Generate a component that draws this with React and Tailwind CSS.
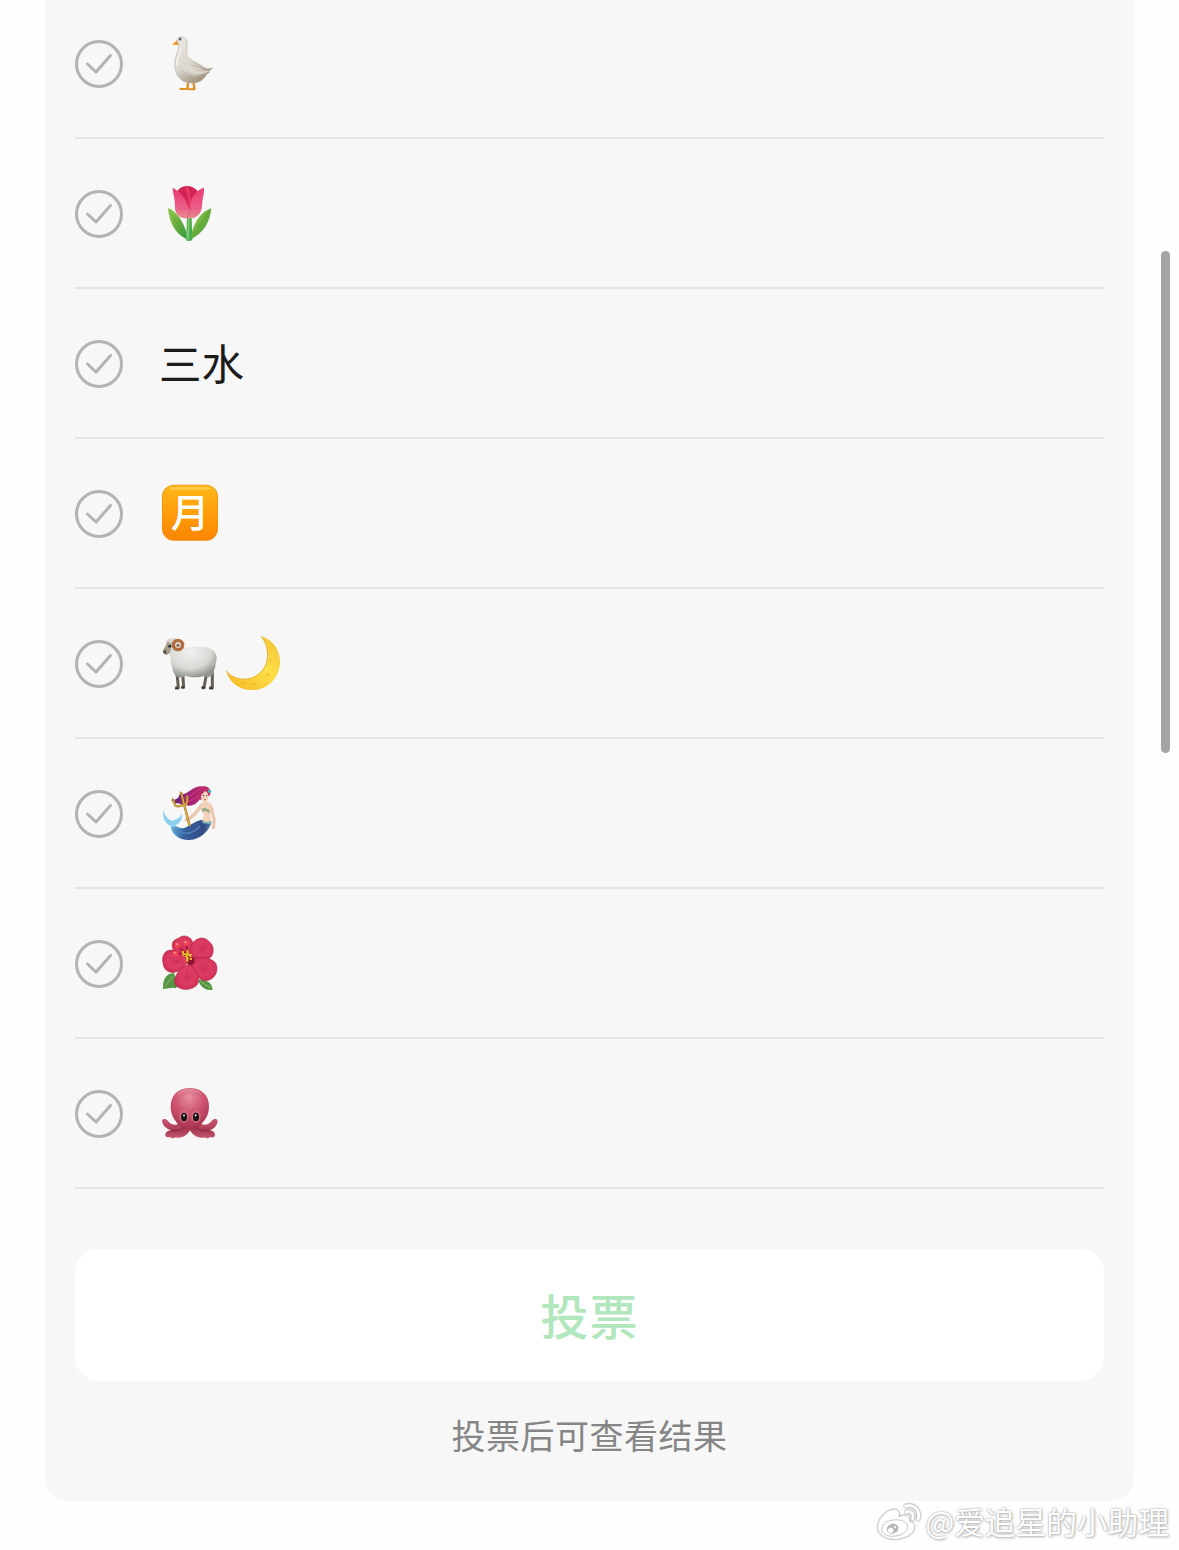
import React from "react";

const Goose = () => (
    <svg viewBox="0 -3 240 240" className="h-20 w-20">
        <defs>
            <linearGradient id="gooseBody" x1="0" y1="0" x2="0.5" y2="1">
                <stop offset="0" stopColor="#e9e6e1" />
                <stop offset="0.6" stopColor="#ddd8d0" />
                <stop offset="1" stopColor="#a39683" />
            </linearGradient>
        </defs>
        <g stroke="#dd8f22" strokeWidth="7" strokeLinecap="round" fill="none">
            <path d="M115 168L112 191M130 168L133 191" />
            <path d="M91 192H111M117 193H133" strokeWidth="6" />
        </g>
        <path d="M81 46L66 59L86 60L92 52Z" fill="#ee9a22" />
        <path d="M81 48C81 32 108 29 111 51C113 68 107 82 113 94C122 106 143 114 159 125C172 133 181 130 188 129L177 139L179 141L168 150C162 164 147 174 127 174C97 177 74 152 74 119C73 98 86 82 87 60Z" fill="url(#gooseBody)" stroke="#bdb5aa" strokeWidth="2" />
        <path d="M96 108C91 131 107 151 139 152C153 151 168 143 178 139C161 139 151 129 136 127C120 125 115 116 112 110" fill="#dcd7cf" />
        <path d="M108 138C128 151 148 151 167 144M130 128C148 142 164 139 181 133" fill="none" stroke="#b5aca0" strokeWidth="2" />
        <path d="M92 70C91 89 80 97 80 119" fill="none" stroke="#f2f0ec" strokeWidth="6" strokeLinecap="round" />
        <circle cx="90" cy="42" r="4.5" fill="#718095" />
        <circle cx="90" cy="42" r="2.5" fill="#343940" />
    </svg>
);

const Tulip = () => (
    <svg viewBox="0 -3 240 240" className="h-20 w-20">
        <defs>
            <linearGradient id="petal" x1="0" y1="0" x2="0" y2="1">
                <stop offset="0" stopColor="#e83d70" />
                <stop offset="0.65" stopColor="#ec5c87" />
                <stop offset="1" stopColor="#e88c90" />
            </linearGradient>
            <linearGradient id="leaf" x1="0" y1="0" x2="1" y2="1">
                <stop offset="0" stopColor="#9bd35a" />
                <stop offset="0.5" stopColor="#6baf3b" />
                <stop offset="1" stopColor="#319b3f" />
            </linearGradient>
        </defs>
        <path d="M54 99C77 107 98 135 109 172V192C80 180 56 143 54 99Z" fill="url(#leaf)" />
        <path d="M184 100C155 109 136 137 125 172V191C158 176 180 143 184 100Z" fill="url(#leaf)" />
        <path d="M57 105C72 132 88 156 106 183M181 105C163 132 144 153 129 182" fill="none" stroke="#5a9a35" strokeWidth="2" />
        <path d="M111 128H125L127 195C122 199 112 199 108 195Z" fill="#4caf4f" />
        <path d="M114 132H118L116 194H111Z" fill="#89cd73" />
        <path d="M82 48C94 29 126 27 142 47L145 105H79Z" fill="#d42355" />
        <path d="M106 36C113 52 116 80 118 108C124 75 122 52 111 34Z" fill="#e83d68" />
        <path d="M68 38C88 49 117 74 121 125C98 138 73 122 75 94C75 71 69 58 68 38Z" fill="url(#petal)" />
        <path d="M162 38C141 45 125 62 121 86C117 101 120 117 108 129C133 136 154 121 156 94C157 68 163 57 162 38Z" fill="url(#petal)" />
        <path d="M121 83C123 102 120 119 108 130" fill="none" stroke="#d9486f" strokeWidth="2" />
    </svg>
);

const MonthBadge = () => (
    <svg viewBox="0 -3 240 240" className="h-20 w-20">
        <defs>
            <linearGradient id="badge" x1="0" y1="0" x2="0" y2="1">
                <stop offset="0" stopColor="#ffb719" />
                <stop offset="0.5" stopColor="#ff9e0c" />
                <stop offset="1" stopColor="#fb8500" />
            </linearGradient>
        </defs>
        <rect x="36" y="29" width="168" height="168" rx="36" fill="#e98f14" />
        <rect x="38" y="31" width="164" height="164" rx="34" fill="url(#badge)" />
        <path d="M64 40H176" stroke="#ffc948" strokeWidth="8" strokeLinecap="round" />
        <text x="120" y="156" textAnchor="middle" className="fill-white font-['Noto_Sans_CJK_JP',sans-serif] text-[116px] font-medium">月</text>
    </svg>
);

const Ram = () => (
    <svg viewBox="0 -3 207 240" className="h-20 w-[69px]">
        <defs>
            <radialGradient id="wool" cx="0.46" cy="0.35" r="0.65">
                <stop offset="0" stopColor="#f1f1ef" />
                <stop offset="0.65" stopColor="#d8d9d5" />
                <stop offset="1" stopColor="#92958f" />
            </radialGradient>
        </defs>
        <path d="M81 146L85 188H76M98 145L101 187H94M170 143L162 188H155M187 132V188H178" fill="none" stroke="#665f56" strokeWidth="9" strokeLinejoin="round" />
        <path d="M75 190H85M94 187H102M155 188H165M178 190H189" stroke="#34322f" strokeWidth="5" />
        <path d="M51 48C58 37 80 39 88 49L100 67C120 69 132 63 153 66C182 64 202 80 200 104C196 109 198 128 192 135C191 145 186 154 180 154C176 160 168 157 164 152C143 158 124 158 108 152C95 161 78 159 74 148C66 135 67 121 61 110C63 97 59 91 59 83C49 81 47 68 51 48Z" fill="url(#wool)" />
        <path d="M50 55C46 68 39 72 39 82C42 92 56 91 60 82L66 61C62 52 53 49 50 55Z" fill="#a59b87" />
        <path d="M39 78L42 86L50 86L47 74Z" fill="#585149" />
        <circle cx="59" cy="64" r="4" fill="#252520" />
        <path d="M49 49C56 38 69 43 78 39L71 54Z" fill="#d8d6cf" />
        <circle cx="84" cy="60" r="14" fill="none" stroke="#a9663a" strokeWidth="10" />
        <circle cx="84" cy="60" r="16" fill="none" stroke="#c98350" strokeWidth="4" strokeDasharray="3 3" />
        <circle cx="84" cy="61" r="5" fill="#9a6a48" />
    </svg>
);

const Moon = () => (
    <svg viewBox="207 -3 213 240" className="h-20 w-[71px]">
        <defs>
            <linearGradient id="moon" x1="1" y1="0.2" x2="0.3" y2="1">
                <stop offset="0" stopColor="#f5c83a" />
                <stop offset="0.45" stopColor="#ffdf48" />
                <stop offset="1" stopColor="#f7c02a" />
            </linearGradient>
        </defs>
        <path d="M333 33C370 44 390 75 390 110C390 159 352 195 306 195C266 195 238 172 228 137C254 169 302 171 332 142C359 115 360 67 333 33Z" fill="url(#moon)" />
        <path d="M228 137C254 169 302 171 332 142C359 115 360 67 333 33" fill="none" stroke="#e0a92e" strokeWidth="2.5" />
        <path d="M360 103L363 108M350 151L355 147M310 177H316M279 172L284 175" stroke="#ebb530" strokeWidth="4" strokeLinecap="round" />
    </svg>
);

const Mermaid = () => (
    <svg viewBox="0 -3 240 240" className="h-20 w-20">
        <defs>
            <linearGradient id="tail" x1="0" y1="0.4" x2="1" y2="0.5">
                <stop offset="0" stopColor="#70bce1" />
                <stop offset="0.35" stopColor="#35639f" />
                <stop offset="0.8" stopColor="#354984" />
                <stop offset="1" stopColor="#5c8fb4" />
            </linearGradient>
            <linearGradient id="hair" x1="0" y1="0" x2="1" y2="0">
                <stop offset="0" stopColor="#61267a" />
                <stop offset="0.5" stopColor="#a62173" />
                <stop offset="1" stopColor="#c43468" />
            </linearGradient>
        </defs>
        <path d="M64 76C83 75 89 63 87 59C120 62 120 28 171 35C184 42 183 53 179 62L150 73C135 93 119 96 105 89C92 91 91 82 75 86Z" fill="url(#hair)" />
        <path d="M103 70C124 66 134 48 157 40M108 80C128 80 138 66 150 59" fill="none" stroke="#cb337f" strokeWidth="4" />
        <path d="M69 154C79 150 84 158 96 160C116 158 130 138 157 134L185 141C178 166 154 193 118 195C88 196 64 178 62 154Z" fill="url(#tail)" />
        <path d="M40 105C36 137 51 149 66 155C72 157 74 152 79 149C90 145 98 132 96 116C89 130 78 133 68 137C55 134 46 126 40 105Z" fill="#8bd0ed" />
        <path d="M72 162C105 183 130 177 150 153" fill="none" stroke="#4f82b8" strokeWidth="4" />
        <path d="M154 91C145 106 127 127 109 135" fill="none" stroke="#ebc7aa" strokeWidth="10" strokeLinecap="round" />
        <path d="M179 89C190 105 185 118 193 133L190 158" fill="none" stroke="#ebc6ab" strokeWidth="9" strokeLinejoin="round" strokeLinecap="round" />
        <path d="M158 80H176C186 91 183 108 180 120L185 140C177 148 163 145 157 137L162 119C151 106 151 92 158 80Z" fill="#f1d2b6" />
        <path d="M154 51C161 45 174 49 175 61C176 74 170 84 162 81C153 77 150 64 154 51Z" fill="#f3d4bc" />
        <path d="M145 70C144 52 157 43 169 44L153 61L154 76Z" fill="#b72f67" />
        <path d="M154 101L166 98L181 107L178 114L166 108L157 110Z" fill="#9cac8c" />
        <path d="M157 135C166 143 177 140 184 138L182 146L158 145Z" fill="#80bbb4" />
        <path d="M158 62H163M168 62H172" stroke="#413a35" strokeWidth="3" />
        <path d="M162 74H168" stroke="#c46068" strokeWidth="3" />
        <path d="M174 43L185 48L180 55L174 51Z" fill="#3eb5c0" />
        <path d="M93 52L119 153M70 73C72 90 76 94 84 94L105 89C112 86 113 76 111 64" fill="none" stroke="#9f7027" strokeWidth="7" strokeLinejoin="round" />
        <path d="M93 52L119 153M70 73C72 90 76 94 84 94L105 89C112 86 113 76 111 64" fill="none" stroke="#dcae45" strokeWidth="4" strokeLinejoin="round" />
        <path d="M91 47L88 60H99ZM66 67L65 79H77ZM112 58L107 70H117Z" fill="#b98a35" />
    </svg>
);

const Hibiscus = () => (
    <svg viewBox="0 -3 240 240" className="h-20 w-20">
        <defs>
            <radialGradient id="flower" cx="0.52" cy="0.48" r="0.64">
                <stop offset="0" stopColor="#d22f56" />
                <stop offset="0.5" stopColor="#dc3c62" />
                <stop offset="1" stopColor="#c8284d" />
            </radialGradient>
        </defs>
        <path d="M39 192C38 163 48 145 72 144C78 165 87 180 78 190C66 185 54 191 39 192Z" fill="#559545" />
        <path d="M144 164C166 163 186 170 188 194C171 198 151 188 144 164Z" fill="#559545" />
        <path d="M42 188L68 154M151 169L184 191" stroke="#90bf68" strokeWidth="3" />
        <g fill="url(#flower)" stroke="#a81f40" strokeWidth="1.5">
            <path d="M111 102C82 91 63 75 67 57C68 43 84 42 91 36C106 27 124 38 128 51C131 71 123 86 120 101Z" />
            <path d="M120 101C111 74 128 45 146 41C164 34 176 47 186 59C193 74 190 94 177 100C158 107 136 104 120 105Z" />
            <path d="M117 107C132 92 183 92 198 116C208 140 192 165 168 167C145 169 131 139 117 107Z" />
            <path d="M116 105C97 84 80 71 58 76C41 79 35 97 39 115C42 142 66 148 87 137C99 132 108 120 116 105Z" />
            <path d="M118 117C140 128 152 161 143 177C128 198 91 199 76 179C67 159 88 126 118 117Z" />
        </g>
        <circle cx="122" cy="108" r="12" fill="#8e1432" />
        <g fill="none" stroke="#ef658a" strokeWidth="2" opacity="0.35">
            <path d="M128 92L158 51M138 98L173 77M138 115L180 128M132 121L158 151M117 124L122 176M108 124L98 170M97 116L63 126M91 100L51 106" />
        </g>
        <path d="M116 111L105 83M108 93L112 54M105 83L83 64M101 88L78 84" stroke="#9a1437" strokeWidth="4" />
        <path d="M96 78H102V85H109V76H116V86H125V95H116V103H108V96H100V89H96ZM108 102H115V110H108ZM119 98H126V105H119Z" fill="#e4b92f" />
        <path d="M104 79H108V83H104ZM102 90H106V94H102ZM113 92H117V96H113Z" fill="#832f18" />
        <g fill="#f04455">
            <circle cx="83" cy="61" r="9" />
            <circle cx="109" cy="54" r="9" />
            <circle cx="77" cy="86" r="9" />
        </g>
        <g fill="#ff9a96">
            <circle cx="81" cy="58" r="3" />
            <circle cx="106" cy="51" r="3" />
            <circle cx="74" cy="83" r="3" />
        </g>
    </svg>
);

const Octopus = () => (
    <svg viewBox="0 -3 240 240" className="h-20 w-20">
        <defs>
            <radialGradient id="head" cx="0.48" cy="0.22" r="0.75">
                <stop offset="0" stopColor="#e690a2" />
                <stop offset="0.5" stopColor="#cf5571" />
                <stop offset="1" stopColor="#a8344f" />
            </radialGradient>
            <linearGradient id="arms" x1="0" y1="0" x2="0" y2="1">
                <stop offset="0" stopColor="#cb5872" />
                <stop offset="0.6" stopColor="#aa3a55" />
                <stop offset="1" stopColor="#c45a71" />
            </linearGradient>
        </defs>
        <path d="M36 138C38 130 48 131 54 138C62 148 72 151 82 148L119 142L157 148C168 151 178 147 185 138C191 130 201 130 203 138C202 152 190 164 177 166C190 166 198 175 194 184C187 191 181 185 177 188C170 193 166 186 159 188C142 190 128 180 120 166C112 180 98 190 81 188C74 186 70 193 63 188C57 184 52 190 47 184C43 176 50 166 64 166C50 162 38 152 36 138Z" fill="url(#arms)" />
        <path d="M64 166C82 169 96 164 106 155M177 166C159 169 145 164 135 155" fill="none" stroke="#8b2d45" strokeWidth="4" strokeLinecap="round" />
        <path d="M62 95C62 59 86 39 119 39C154 39 177 60 177 94C177 126 160 140 152 150C142 164 131 165 120 163C108 165 97 163 88 151C80 142 62 125 62 95Z" fill="url(#head)" />
        <path d="M83 57C102 41 133 41 154 56" fill="none" stroke="#edb0ba" strokeWidth="3" opacity="0.6" />
        <ellipse cx="102" cy="124" rx="14" ry="19" fill="#d06b81" />
        <ellipse cx="138" cy="124" rx="14" ry="19" fill="#d06b81" />
        <ellipse cx="102" cy="126" rx="9" ry="13" fill="#171113" />
        <ellipse cx="138" cy="126" rx="9" ry="13" fill="#171113" />
        <ellipse cx="102" cy="121" rx="2.5" ry="3.5" fill="#eee" />
        <ellipse cx="137" cy="121" rx="2.5" ry="3.5" fill="#eee" />
    </svg>
);

const options = [
    { id: "goose", content: <Goose /> },
    { id: "tulip", content: <Tulip /> },
    { id: "sanshui", content: <span className="-mt-[4px] pl-[9px] text-[42.5px] leading-none text-[#1b1b1b]">三水</span> },
    { id: "month", content: <MonthBadge /> },
    { id: "ram-moon", content: <><Ram /><Moon /></> },
    { id: "mermaid", content: <Mermaid /> },
    { id: "hibiscus", content: <Hibiscus /> },
    { id: "octopus", content: <Octopus /> },
];

const CheckCircle = () => (
    <svg viewBox="0 0 48 48" fill="none" stroke="#b3b3b3" strokeWidth="3" strokeLinecap="round" strokeLinejoin="round" className="h-12 w-12 shrink-0">
        <circle cx="24" cy="24" r="22.5" />
        <path d="M12.5 24L21 32L35.5 15.5" />
    </svg>
);

const VoteRow = ({ children }) => (
    <li className="flex h-[150px] items-center gap-[27px] border-b-2 border-[#e5e5e6] pt-[2px]">
        <CheckCircle />
        <div className="flex items-center">{children}</div>
    </li>
);

const WeiboLogo = () => (
    <svg viewBox="0 0 132 114" className="h-[38px] w-11 drop-shadow-[0_0_1px_rgba(0,0,0,0.6)]">
        <path d="M48 20C25 23 4 50 3 71C1 92 24 108 54 108C87 107 111 91 112 72C112 62 105 57 96 55C99 43 91 36 76 38L65 42C70 28 62 18 48 20Z" fill="#fff" />
        <path d="M49 51C24 53 12 68 15 83C18 97 37 102 56 99C80 96 95 82 91 66C87 54 70 49 49 51Z" fill="#fff" stroke="#b8b8b8" strokeWidth="2.5" />
        <ellipse cx="47" cy="77" rx="18" ry="15" transform="rotate(-20 47 77)" fill="#b8b8b8" />
        <circle cx="41" cy="82" r="8" fill="#fff" />
        <circle cx="54" cy="72" r="3" fill="#fff" />
        <path d="M86 9C111 1 132 24 123 49M89 27C102 23 111 33 107 47" fill="none" stroke="#fff" strokeWidth="9" strokeLinecap="round" />
    </svg>
);

const App = () => {
    return (
        <div className="relative h-[1550px] w-[1179px] overflow-hidden bg-[#fefefe] font-['Noto_Sans_CJK_SC',sans-serif]">
            <main className="mx-[45px] -mt-[11px] h-[1512px] rounded-b-[24px] bg-[#f7f7f7] px-[30px]">
                <ul>
                    {options.map((option) => (
                        <VoteRow key={option.id}>{option.content}</VoteRow>
                    ))}
                </ul>
                <button className="mt-[60px] flex h-[132px] w-full items-center justify-center rounded-[24px] bg-white pb-[2px] text-[48px] leading-none font-medium tracking-[1px] text-[#b2e6bd]">
                    投票
                </button>
                <p className="mt-[37px] text-center text-[34px] leading-[34px] tracking-[0.5px] text-[#858585]">投票后可查看结果</p>
            </main>
            <div className="absolute top-[251px] right-[9px] h-[502px] w-[9px] rounded-full bg-[#a4a4a4]" />
            <div className="absolute right-[10px] bottom-[9px] flex items-center gap-[4px] text-white">
                <WeiboLogo />
                <span className="-mt-[2px] text-[30.7px] leading-[40px] [text-shadow:0_0_2px_#999,1px_1px_3px_#bbb]">@爱追星的小助理</span>
            </div>
        </div>
    );
};

export default App;
